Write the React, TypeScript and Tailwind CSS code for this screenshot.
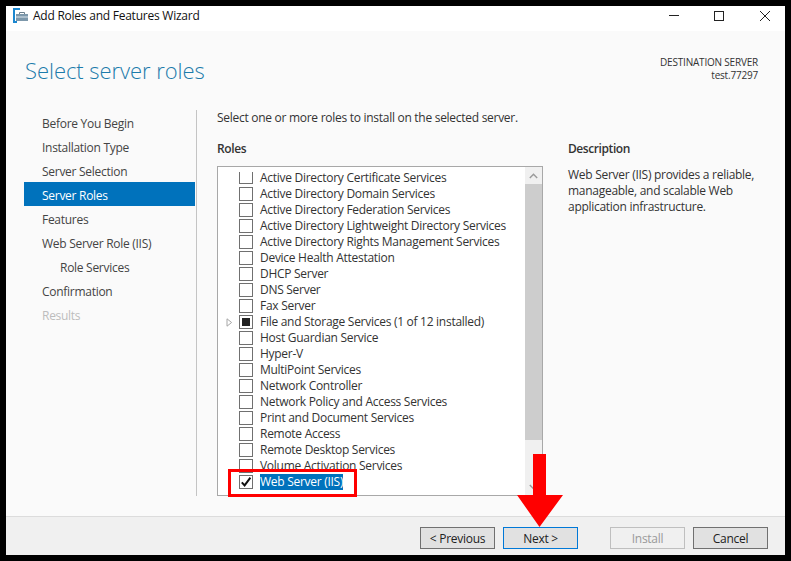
const steps = [
  { label: 'Before You Begin' },
  { label: 'Installation Type' },
  { label: 'Server Selection' },
  { label: 'Server Roles', active: true },
  { label: 'Features' },
  { label: 'Web Server Role (IIS)' },
  { label: 'Role Services', sub: true },
  { label: 'Confirmation' },
  { label: 'Results', disabled: true },
];

const roles = [
  'Active Directory Certificate Services',
  'Active Directory Domain Services',
  'Active Directory Federation Services',
  'Active Directory Lightweight Directory Services',
  'Active Directory Rights Management Services',
  'Device Health Attestation',
  'DHCP Server',
  'DNS Server',
  'Fax Server',
  'File and Storage Services (1 of 12 installed)',
  'Host Guardian Service',
  'Hyper-V',
  'MultiPoint Services',
  'Network Controller',
  'Network Policy and Access Services',
  'Print and Document Services',
  'Remote Access',
  'Remote Desktop Services',
  'Volume Activation Services',
  'Web Server (IIS)',
];

function AppIcon() {
  return (
    <svg width="15" height="15" viewBox="0 0 15 15" className="shrink-0">
      <path d="M0 0h7v2H0z M0 0h2v15H0z M2 13h2v2H2z" fill="#1b87d0" />
      <path d="M3 6h12v7H3z" fill="#7d98ab" />
      <path d="M3 8.5h12v1H3z" fill="#dfe7ec" />
      <path d="M6.5 6V4.5h5V6" fill="none" stroke="#6b7f8d" />
    </svg>
  );
}

function RoleRow({ name, index }: { name: string; index: number }) {
  const first = index === 0;
  const partial = name.startsWith('File and');
  const checked = name.startsWith('Web Server');
  return (
    <div className="flex h-4 items-center">
      <div className="flex w-[21px] shrink-0 justify-center">
        {partial && (
          <svg width="7" height="9" viewBox="0 0 7 9" className="ml-[2px]">
            <path d="M1 .8 5.6 4.5 1 8.2z" fill="none" stroke="#a6a6a6" />
          </svg>
        )}
      </div>
      <div
        className={`flex w-[14px] shrink-0 items-center justify-center border-[#707070] bg-white ${
          first ? 'mb-px h-[12px] border-x border-b' : 'h-[14px] border'
        }`}
      >
        {partial && <div className="h-2 w-2 bg-[#222]" />}
        {checked && (
          <svg width="12" height="12" viewBox="0 0 12 12">
            <path d="M1.8 6.4 4.6 9.4 10.4 1.6" fill="none" stroke="#111" strokeWidth="2" />
          </svg>
        )}
      </div>
      <span
        className={`ml-[7px] whitespace-nowrap leading-4 ${
          checked ? 'bg-[#0072bc] text-white' : 'text-[#333]'
        }`}
      >
        {name}
      </span>
    </div>
  );
}

function WizardButton({ label, variant }: { label: string; variant?: 'focus' | 'disabled' }) {
  const look =
    variant === 'focus'
      ? 'border-[#0078d7] bg-[#e1e1e1] text-[#222]'
      : variant === 'disabled'
        ? 'border-[#bfbfbf] bg-[#f0f0f0] text-[#9a9a9a]'
        : 'border-[#707070] bg-[#e1e1e1] text-[#222]';
  return (
    <button className={`h-[22px] w-[75px] border pt-px text-center leading-5 ${look}`}>{label}</button>
  );
}

export default function App() {
  return (
    <div className="relative h-[561px] w-[791px] overflow-hidden bg-black p-[6px] font-['Open_Sans',sans-serif] text-[12px] tracking-[-0.28px]">
      <div className="flex h-[549px] w-[779px] flex-col">
        {/* title bar */}
        <div className="flex h-[25px] items-center bg-white pb-[6px] pl-[7px] pr-[15px] text-[#111]">
          <AppIcon />
          <span className="ml-[5px] tracking-[-0.24px]">Add Roles and Features Wizard</span>
          <div className="ml-auto flex items-center gap-[35px]">
            <div className="h-px w-[10px] bg-[#222]" />
            <div className="h-[10px] w-[10px] border border-[#222]" />
            <svg width="10" height="10" viewBox="0 0 10 10" className="ml-px">
              <path d="M0 0 10 10M10 0 0 10" stroke="#222" strokeWidth="1" />
            </svg>
          </div>
        </div>

        {/* page */}
        <div className="flex min-h-0 flex-1 flex-col bg-[#fafafa]">
          <div className="flex h-[79px] items-start justify-between pl-[19px] pr-[27px]">
            <h1 className="mt-[22px] text-[22px] font-light leading-[34px] tracking-[-0.06px] text-[#1c7bab]">
              Select server roles
            </h1>
            <div className="mt-[25px] text-right text-[10px] leading-[13px] tracking-[-0.2px] text-[#333]">
              <div>DESTINATION SERVER</div>
              <div>test.77297</div>
            </div>
          </div>

          <div className="flex min-h-0 flex-1 pb-5 pl-[18px]">
            <div className="w-[172px] shrink-0 pr-px">
              {steps.map((step) => (
                <div
                  key={step.label}
                  className={`flex h-6 items-center pt-[4px] ${step.sub ? 'pl-9' : 'pl-[18px]'} ${
                    step.active
                      ? 'bg-[#0072bc] text-white'
                      : step.disabled
                        ? 'text-[#bdbdbd]'
                        : 'text-[#444]'
                  }`}
                >
                  {step.label}
                </div>
              ))}
            </div>

            <div className="flex min-w-0 flex-1 border-l border-[#c4c4c4] pl-5">
              <div className="w-[351px] shrink-0">
                <div className="flex h-[16px] items-center text-[#333]">
                  Select one or more roles to install on the selected server.
                </div>
                <div className="mt-[15px] flex h-4 items-center font-semibold tracking-[-0.4px] text-[#333]">Roles</div>
                <div className="mt-[9px] flex h-[330px] w-[326px] border border-[#a8a8a8] bg-white">
                  <div className="min-w-0 flex-1 overflow-hidden pt-[3px]">
                    {roles.map((name, i) => (
                      <RoleRow key={name} name={name} index={i} />
                    ))}
                  </div>
                  <div className="flex w-[17px] shrink-0 flex-col bg-[#f0f0f0]">
                    <div className="flex h-[17px] items-center justify-center">
                      <svg width="9" height="6" viewBox="0 0 9 6">
                        <path d="M.8 5 4.5 1.2 8.2 5" fill="none" stroke="#9a9a9a" strokeWidth="1.4" />
                      </svg>
                    </div>
                    <div className="h-[256px] bg-[#cdcdcd]" />
                    <div className="mt-auto flex h-[17px] items-center justify-center">
                      <svg width="9" height="6" viewBox="0 0 9 6">
                        <path d="M.8 1 4.5 4.8 8.2 1" fill="none" stroke="#9a9a9a" strokeWidth="1.4" />
                      </svg>
                    </div>
                  </div>
                </div>
              </div>
              <div className="w-[192px] pt-[31px] text-[#333]">
                <div className="flex h-4 items-center font-semibold tracking-[-0.42px]">Description</div>
                <p className="mt-[10px] leading-4">
                  Web Server (IIS) provides a reliable, manageable, and scalable Web application infrastructure.
                </p>
              </div>
            </div>
          </div>
        </div>

        {/* footer */}
        <div className="flex h-[39px] items-start border-t border-[#dcdcdc] bg-[#f0f0f0] pl-[414px] pt-[10px]">
          <WizardButton label="< Previous" />
          <div className="ml-2">
            <WizardButton label="Next >" variant="focus" />
          </div>
          <div className="ml-8">
            <WizardButton label="Install" variant="disabled" />
          </div>
          <div className="ml-2">
            <WizardButton label="Cancel" />
          </div>
        </div>
      </div>

      {/* annotations drawn over the screenshot */}
      <div className="absolute left-[228px] top-[469px] h-[28px] w-[129px] border-[3px] border-[#ff0000]" />
      <svg className="absolute left-[516px] top-[453px]" width="48" height="75" viewBox="0 0 48 75">
        <path d="M17 1h13v41h17L23.5 74 1 42h16z" fill="#ff0000" />
      </svg>
    </div>
  );
}
